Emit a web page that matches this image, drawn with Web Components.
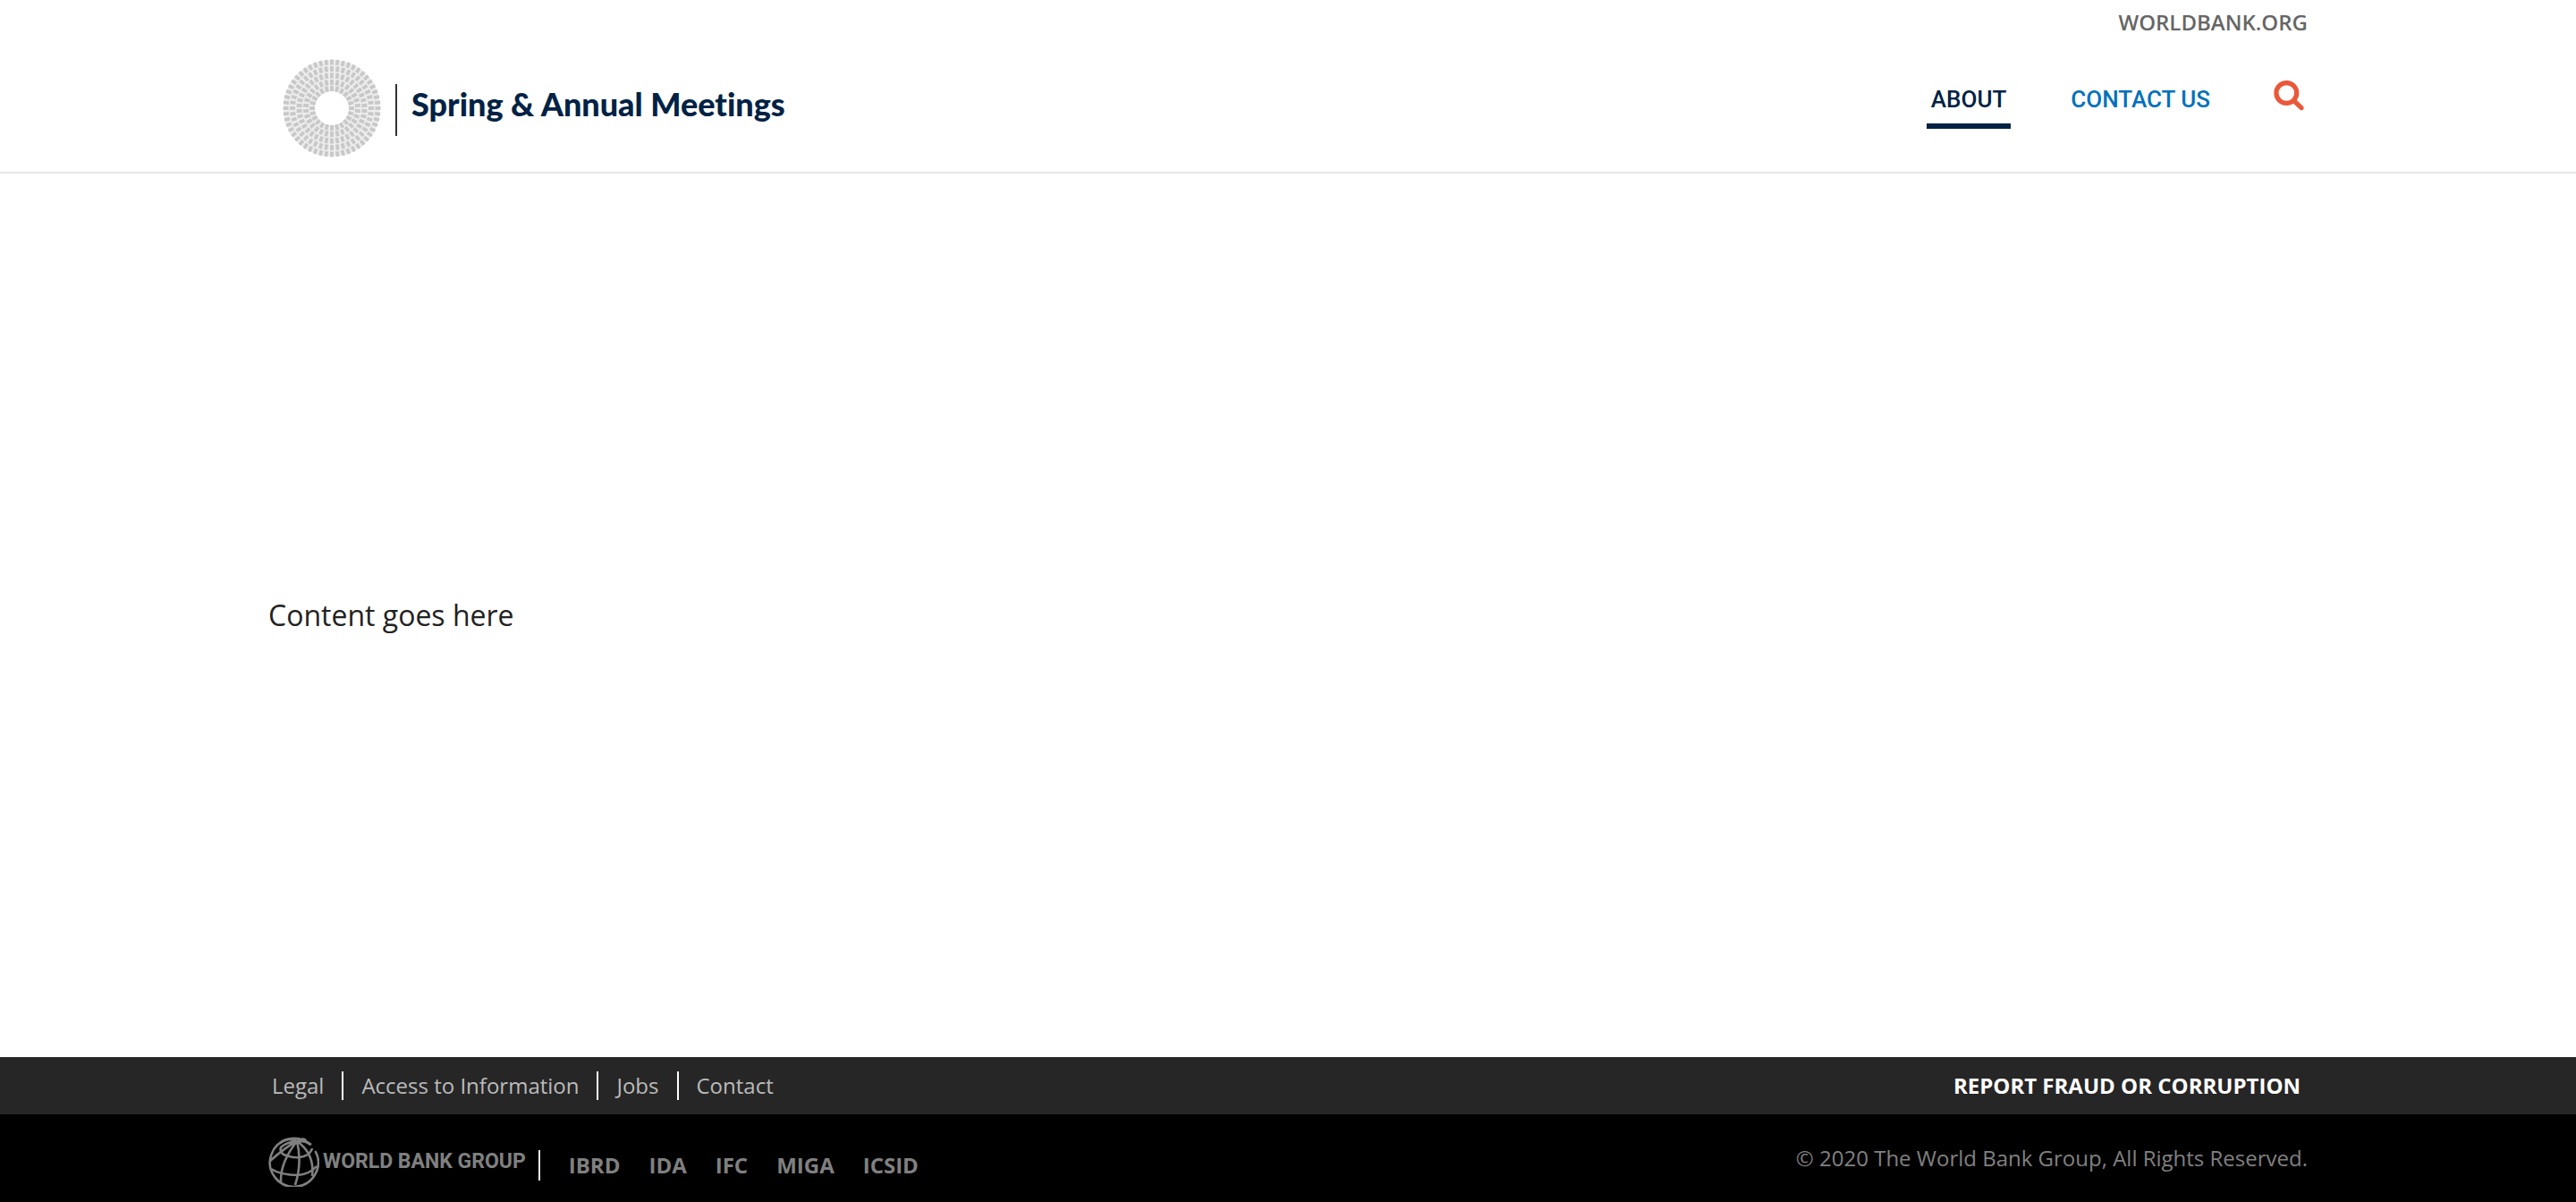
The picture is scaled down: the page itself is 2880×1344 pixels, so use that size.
<!DOCTYPE html>
<html lang="en">
<head>
<meta charset="utf-8">
<title>Spring &amp; Annual Meetings</title>
<style>
html, body { margin: 0; height: 100%; }
body { font-family: "Open Sans", sans-serif; background: #fff; color: #222; }
</style>
</head>
<body>
<site-page>
  <site-header slot="header">
    <a slot="top" href="#worldbank">WORLDBANK.ORG</a>
    <site-brand slot="brand">Spring &amp; Annual Meetings</site-brand>
    <nav-link slot="nav" href="#about" current>ABOUT</nav-link>
    <nav-link slot="nav" href="#contact">CONTACT US</nav-link>
    <search-button slot="nav"></search-button>
  </site-header>
  <p>Content goes here</p>
  <site-footer slot="footer">
    <a slot="legal" href="#legal">Legal</a>
    <a slot="legal" href="#access">Access to Information</a>
    <a slot="legal" href="#jobs">Jobs</a>
    <a slot="legal" href="#contact" class="last">Contact</a>
    <a slot="report" href="#report">REPORT FRAUD OR CORRUPTION</a>
    <group-logo slot="logo">WORLD BANK GROUP</group-logo>
    <a slot="member" href="#ibrd">IBRD</a>
    <a slot="member" href="#ida">IDA</a>
    <a slot="member" href="#ifc">IFC</a>
    <a slot="member" href="#miga">MIGA</a>
    <a slot="member" href="#icsid">ICSID</a>
    <span slot="copyright">© 2020 The World Bank Group, All Rights Reserved.</span>
  </site-footer>
</site-page>
<script>
class ShadowElement extends HTMLElement {
  constructor() {
    super();
    this.attachShadow({ mode: "open" }).innerHTML = this.render();
  }
}

customElements.define("site-page", class extends ShadowElement {
  render() {
    return `<style>
      :host { display: flex; flex-direction: column; min-height: 100vh; }
      main { flex: 1; display: flex; flex-direction: column; justify-content: center; width: 100%; max-width: 2280px; margin: 0 auto; }
      ::slotted(p) { margin: 0; font-size: 32px; line-height: 48px; color: #222; }
    </style>
    <slot name="header"></slot><main><slot></slot></main><slot name="footer"></slot>`;
  }
});

customElements.define("site-header", class extends ShadowElement {
  render() {
    return `<style>
      :host { display: block; border-bottom: 2px solid #e5e5e5; }
      header { max-width: 2280px; margin: 0 auto; display: flex; flex-direction: column; padding-bottom: 16px; }
      .top { display: flex; justify-content: flex-end; padding: 8px 0 24px; }
      .row { display: flex; justify-content: space-between; align-items: flex-start; padding: 0 4px 0 16px; }
      nav { display: flex; align-items: flex-start; gap: 62px; padding-top: 24px; }
      ::slotted(a) { font-size: 24px; line-height: 34px; font-weight: 600; color: #666; text-decoration: none; }
    </style>
    <header>
      <div class="top"><slot name="top"></slot></div>
      <div class="row"><slot name="brand"></slot><nav aria-label="Main"><slot name="nav"></slot></nav></div>
    </header>`;
  }
});

customElements.define("site-brand", class extends ShadowElement {
  render() {
    const rings = [[51.5, 52], [44, 44], [36.5, 38], [29, 30], [22, 24]];
    let dashes = "";
    for (const [r, n] of rings) {
      for (let i = 0; i < n; i++) {
        dashes += `<path d="M0 ${-r - 3}V${-r + 3}" transform="rotate(${(i * 360 / n).toFixed(2)})"/>`;
      }
    }
    return `<style>
      :host { display: flex; align-items: center; gap: 16px; }
      svg { display: block; width: 110px; height: 110px; }
      span { display: block; margin-top: 4px; border-left: 2px solid #333; padding: 0 0 14px 16px; font-family: Lato, sans-serif; font-weight: 900; font-size: 36px; font-variant-ligatures: none; line-height: 44px; color: #002244; }
    </style>
    <svg viewBox="-55 -55 110 110" aria-hidden="true"><circle r="36.5" fill="none" stroke="#ededed" stroke-width="35"/><g stroke="#c8c8c8" stroke-width="3.8">${dashes}</g></svg>
    <span><slot></slot></span>`;
  }
});

customElements.define("nav-link", class extends ShadowElement {
  render() {
    const current = this.hasAttribute("current");
    return `<style>
      :host { display: block; }
      a { display: block; padding: 2px 5px 8px; border-bottom: 6px solid ${current ? "#002244" : "transparent"}; color: ${current ? "#002244" : "#0071bc"}; font-family: Roboto, sans-serif; font-weight: 500; font-size: 26px; line-height: 38px; text-decoration: none; }
    </style>
    <a href="${this.getAttribute("href")}"${current ? ' aria-current="page"' : ""}><slot></slot></a>`;
  }
});

customElements.define("search-button", class extends ShadowElement {
  render() {
    return `<style>
      :host { display: block; margin-left: 4px; }
      button { display: block; padding: 0; border: 0; background: none; }
      svg { display: block; width: 34px; height: 34px; }
    </style>
    <button type="button" aria-label="Search"><svg viewBox="0 0 34 34" fill="none" stroke="#eb5739" stroke-width="5.2"><circle cx="14.3" cy="14" r="11.4"/><path d="M23 23L31 30.6" stroke-linecap="round"/></svg></button>`;
  }
});

customElements.define("site-footer", class extends ShadowElement {
  render() {
    return `<style>
      :host { display: block; }
      .bar { display: flex; justify-content: center; background: #262626; }
      .base { background: #000; }
      .wrap { flex: 1; box-sizing: border-box; max-width: 2280px; display: flex; justify-content: space-between; align-items: center; padding: 16px 8px 16px 4px; }
      .base .wrap { align-items: flex-start; padding: 24px 0 17px; }
      nav { display: flex; align-items: center; }
      .group { display: flex; align-items: flex-start; }
      ::slotted(a) { text-decoration: none; font-size: 24px; line-height: 32px; }
      ::slotted([slot="legal"]) { color: #bbb; padding-right: 20px; margin-right: 20px; border-right: 2px solid #fff; }
      ::slotted(.last) { border-right: 0; margin-right: 0; padding-right: 0; }
      ::slotted([slot="report"]) { color: #fff; font-weight: 700; }
      .members { gap: 32px; border-left: 2px solid #eee; margin: 16px 0 0 14px; padding-left: 32px; }
      ::slotted([slot="member"]) { color: #808080; font-weight: 700; line-height: 34px; }
      ::slotted([slot="copyright"]) { color: #808080; font-size: 24px; line-height: 34px; padding-top: 8px; }
    </style>
    <footer>
      <div class="bar"><div class="wrap"><nav aria-label="Legal"><slot name="legal"></slot></nav><slot name="report"></slot></div></div>
      <div class="bar base"><div class="wrap"><div class="group"><slot name="logo"></slot><nav class="members" aria-label="Members"><slot name="member"></slot></nav></div><slot name="copyright"></slot></div></div>
    </footer>`;
  }
});

customElements.define("group-logo", class extends ShadowElement {
  render() {
    return `<style>
      :host { display: flex; align-items: center; gap: 4px; color: #808080; font-family: Roboto, sans-serif; font-weight: 700; font-size: 23px; line-height: 32px; }
      svg { display: block; width: 57px; height: 57px; }
    </style>
    <svg viewBox="0 0 57 57" fill="none" stroke="#808080" stroke-width="2.6" aria-hidden="true">
      <path d="M47 10A27 27 0 1 0 52.5 17"/>
      <path d="M32 6Q22 1 13 8M32 6Q20 7 14 13Q12 20 20 22Q34 27 44 21Q48 18 49 14M32 6Q20 12 2 28M32 6Q13 30 14 52M32 6Q38 30 30 55M32 6Q52 20 49 45M32 6Q42 5 48 10M32 6Q40 1 42 6"/>
      <path d="M3 37Q14 44 33 44Q46 43 54 34"/>
    </svg>
    <span><slot></slot></span>`;
  }
});
</script>
</body>
</html>
